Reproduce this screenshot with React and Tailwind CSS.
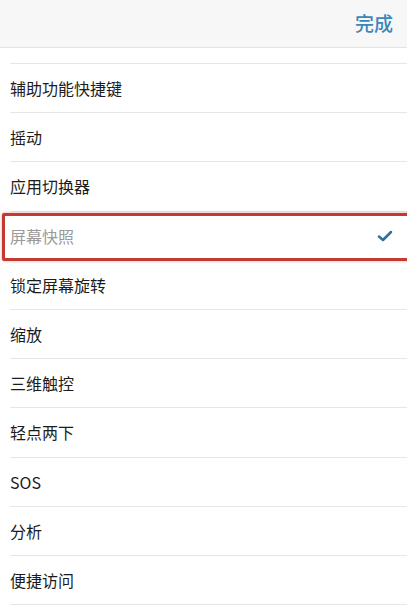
export default function App() {
  const items = [
    "辅助功能快捷键",
    "摇动",
    "应用切换器",
    "屏幕快照",
    "锁定屏幕旋转",
    "缩放",
    "三维触控",
    "轻点两下",
    "SOS",
    "分析",
    "便捷访问",
  ];
  return (
    <div
      className="w-[407px] h-[613px] overflow-hidden bg-white"
      style={{ fontFamily: '"Noto Sans CJK SC", "Noto Sans", sans-serif' }}
    >
      <div className="h-[48px] bg-[#f7f7f7] border-b border-[#e3e3e3] flex items-center justify-end pr-[14px]">
        <span className="text-[19px] text-[#3a87b8] font-medium">完成</span>
      </div>
      <div className="h-[15px]" />
      <div className="ml-[10px] border-t border-[#e6e6e6]">
        {items.map((t, i) => (
          <div
            key={t}
            className="relative h-[49.2px] border-b border-[#e6e6e6] flex items-center justify-between pr-[14px]"
          >
            <span
              className={
                "text-[16px] " + (i === 3 ? "text-[#9a9a9a]" : "text-[#1c1c1c]")
              }
            >
              {t}
            </span>
            {i === 3 && (
              <>
                <svg width="16" height="12" viewBox="0 0 16 12" fill="none">
                  <path
                    d="M2 6.5 L6 10 L14 2"
                    stroke="#2f6f9c"
                    strokeWidth="2.5"
                    strokeLinecap="round"
                    strokeLinejoin="round"
                  />
                </svg>
                <div className="absolute left-[-8px] right-[-10px] top-[1px] bottom-[-1px] border-[3px] border-[#c23a32] rounded-[2px] shadow-[0_0_3px_rgba(194,58,50,0.5)]" />
              </>
            )}
          </div>
        ))}
      </div>
    </div>
  );
}
